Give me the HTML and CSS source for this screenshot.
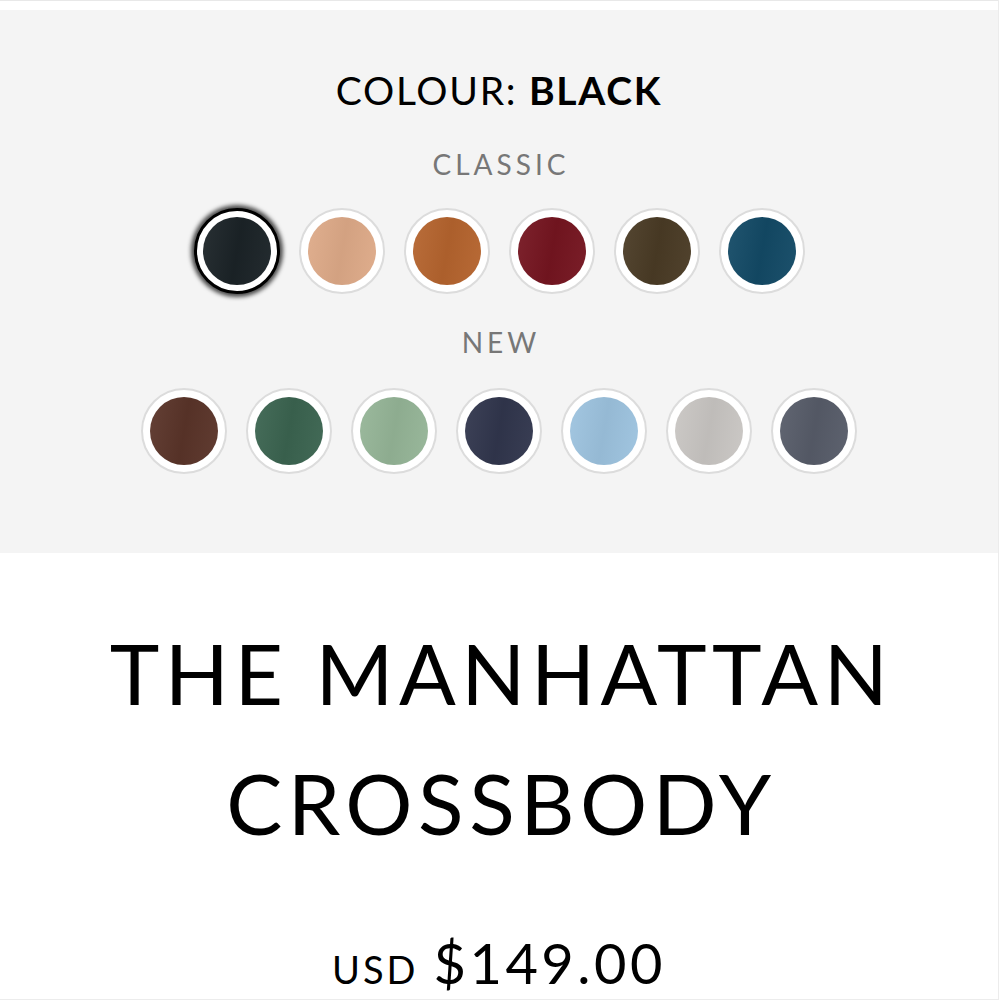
FILE: index.html
```html
<!DOCTYPE html>
<html lang="en">
<head>
<meta charset="utf-8">
<title>The Manhattan Crossbody</title>
<link rel="stylesheet" href="styles.css">
</head>
<body>
<div class="frame">
  <div class="topbar"></div>
  <section class="panel">
    <h2 class="colour-heading">COLOUR: <strong>BLACK</strong></h2>
    <div class="group-label">CLASSIC</div>
    <div class="swatch-row">
      <button class="swatch selected" aria-label="Black"><span class="chip c-black"></span></button>
      <button class="swatch" aria-label="Nude"><span class="chip c-nude"></span></button>
      <button class="swatch" aria-label="Cognac"><span class="chip c-cognac"></span></button>
      <button class="swatch" aria-label="Burgundy"><span class="chip c-burgundy"></span></button>
      <button class="swatch" aria-label="Olive"><span class="chip c-olive"></span></button>
      <button class="swatch" aria-label="Teal"><span class="chip c-teal"></span></button>
    </div>
    <div class="group-label group-new">NEW</div>
    <div class="swatch-row row-new">
      <button class="swatch" aria-label="Chocolate"><span class="chip c-choc"></span></button>
      <button class="swatch" aria-label="Forest"><span class="chip c-forest"></span></button>
      <button class="swatch" aria-label="Sage"><span class="chip c-sage"></span></button>
      <button class="swatch" aria-label="Navy"><span class="chip c-navy"></span></button>
      <button class="swatch" aria-label="Sky"><span class="chip c-sky"></span></button>
      <button class="swatch" aria-label="Silver"><span class="chip c-silver"></span></button>
      <button class="swatch" aria-label="Slate"><span class="chip c-slate"></span></button>
    </div>
  </section>
  <h1 class="product-title"><span class="line">THE MANHATTAN</span><span class="line">CROSSBODY</span></h1>
  <div class="price"><span class="currency">USD</span><span class="amount">$149.00</span></div>
</div>
</body>
</html>
```

FILE: styles.css
```css
html, body {
  margin: 0;
  padding: 0;
  background: #ffffff;
}
body {
  font-family: "Lato", "Liberation Sans", sans-serif;
  color: #000;
}
.frame {
  height: 999px;
  border-bottom: 1px solid #ececec;
  border-right: 1px solid #ececec;
  overflow: hidden;
  box-sizing: content-box;
  width: 998px;
}
.topbar {
  height: 8px;
  border-top: 1px solid #e8e8e8;
  background: #fff;
  margin-bottom: 1px;
}
.panel {
  background: #f4f4f4;
  padding: 56px 0 79px;
  text-align: center;
}
.colour-heading {
  margin: 0;
  font-size: 39px;
  line-height: 48px;
  font-weight: 400;
  letter-spacing: 1.7px;
}
.colour-heading strong {
  font-weight: 700;
}
.group-label {
  margin-top: 33px;
  font-size: 28px;
  line-height: 34px;
  letter-spacing: 4px;
  padding-left: 4px;
  color: #777;
}
.group-new {
  margin-top: 31px;
}
.swatch-row {
  margin-top: 27px;
  display: flex;
  justify-content: center;
  gap: 19px;
}
.row-new {
  margin-top: 29px;
}
.swatch {
  width: 86px;
  height: 86px;
  box-sizing: border-box;
  border-radius: 50%;
  border: 2px solid #dcdcdc;
  background: #fff;
  padding: 7px;
  margin: 0;
  display: flex;
  cursor: pointer;
}
.swatch.selected {
  border: 3px solid #000;
  padding: 6px;
  box-shadow: 0 0 4px 3px rgba(0, 0, 0, 0.7);
}
.chip {
  flex: 1;
  border-radius: 50%;
  background-image: linear-gradient(100deg, rgba(255,255,255,0.06), rgba(0,0,0,0.05) 50%, rgba(255,255,255,0.04));
}
.c-black { background-color: #1b2327; }
.c-nude { background-color: #deaa88; }
.c-cognac { background-color: #b5642e; }
.c-burgundy { background-color: #751520; }
.c-olive { background-color: #4a3b25; }
.c-teal { background-color: #134a66; }
.c-choc { background-color: #5a3429; }
.c-forest { background-color: #3b6450; }
.c-sage { background-color: #95b597; }
.c-navy { background-color: #31364d; }
.c-sky { background-color: #9dc3df; }
.c-silver { background-color: #c9c6c3; }
.c-slate { background-color: #575c69; }

.product-title {
  margin: 55px 0 0;
  font-size: 84px;
  line-height: 130px;
  font-weight: 400;
  text-align: center;
  letter-spacing: 5.5px;
}
.product-title .line {
  display: block;
  padding-left: 5px;
}
.price {
  margin-top: 65px;
  text-align: center;
  line-height: 60px;
}
.currency {
  font-size: 38px;
  letter-spacing: 3px;
  margin-right: 15px;
}
.amount {
  font-size: 56px;
  letter-spacing: 3.5px;
}
```
